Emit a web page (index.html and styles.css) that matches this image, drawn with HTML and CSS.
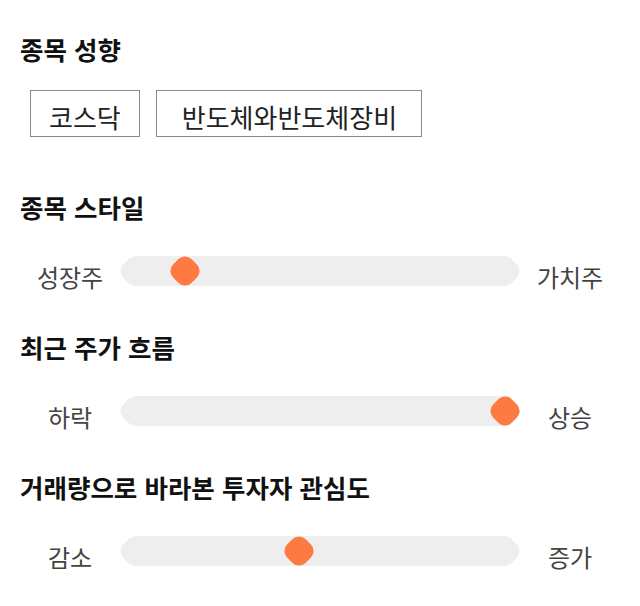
FILE: index.html
```html
<!DOCTYPE html>
<html lang="ko">
<head>
<meta charset="utf-8">
<link rel="stylesheet" href="styles.css">
</head>
<body>
<div class="page">
  <section class="sec">
    <h2 class="title">종목 성향</h2>
    <div class="tags">
      <span class="tag">코스닥</span>
      <span class="tag tag-wide">반도체와반도체장비</span>
    </div>
  </section>
  <section class="sec">
    <h2 class="title">종목 스타일</h2>
    <div class="row">
      <span class="lab">성장주</span>
      <div class="track"><span class="thumb" style="left: 13.5%"></span></div>
      <span class="lab">가치주</span>
    </div>
  </section>
  <section class="sec">
    <h2 class="title">최근 주가 흐름</h2>
    <div class="row">
      <span class="lab">하락</span>
      <div class="track"><span class="thumb" style="left: 100%"></span></div>
      <span class="lab">상승</span>
    </div>
  </section>
  <section class="sec">
    <h2 class="title">거래량으로 바라본 투자자 관심도</h2>
    <div class="row">
      <span class="lab">감소</span>
      <div class="track"><span class="thumb" style="left: 44.3%"></span></div>
      <span class="lab">증가</span>
    </div>
  </section>
</div>
</body>
</html>
```

FILE: styles.css
```css
html, body {
  margin: 0;
  padding: 0;
  background: #fff;
}
body {
  font-family: "Noto Sans CJK KR", "Noto Sans", sans-serif;
  color: #222;
}
.page {
  padding: 34px 20px 40px 20px;
  display: flex;
  flex-direction: column;
}
.sec {
  display: flex;
  flex-direction: column;
}
.sec + .sec {
  margin-top: 46px;
}
.sec:nth-child(2) {
  margin-top: 55px;
}
.title {
  margin: 0;
  font-size: 25.5px;
  line-height: 30px;
  font-weight: 700;
  color: #111;
}
.tags {
  display: flex;
  gap: 16px;
  margin-top: 26px;
  padding-left: 10px;
}
.tag {
  box-sizing: border-box;
  height: 47px;
  border: 1px solid #8a8a8a;
  padding: 7px 18px 0 18px;
  font-size: 26px;
  line-height: 38px;
  color: #222;
}
.tag-wide {
  padding-left: 25px;
  padding-right: 24px;
}
.row {
  margin-top: 34px;
  display: grid;
  grid-template-columns: 100px 400px 100px;
  align-items: start;
}
.lab {
  text-align: center;
  font-size: 24px;
  line-height: 30px;
  color: #444;
  padding-top: 6px;
  margin-bottom: -6px;
}
.track {
  position: relative;
  height: 30px;
  margin: 0 15px;
  background: #eeeeee;
}
.track::before,
.track::after {
  content: "";
  position: absolute;
  top: 2px;
  width: 26px;
  height: 26px;
  background: #eeeeee;
  border-radius: 35%;
  transform: rotate(45deg);
}
.track::before {
  left: -13px;
}
.track::after {
  right: -13px;
}
.thumb {
  position: absolute;
  top: 2px;
  width: 26px;
  height: 26px;
  margin-left: -13px;
  background: #ff7a40;
  border-radius: 35%;
  transform: rotate(45deg);
  z-index: 1;
}
```
